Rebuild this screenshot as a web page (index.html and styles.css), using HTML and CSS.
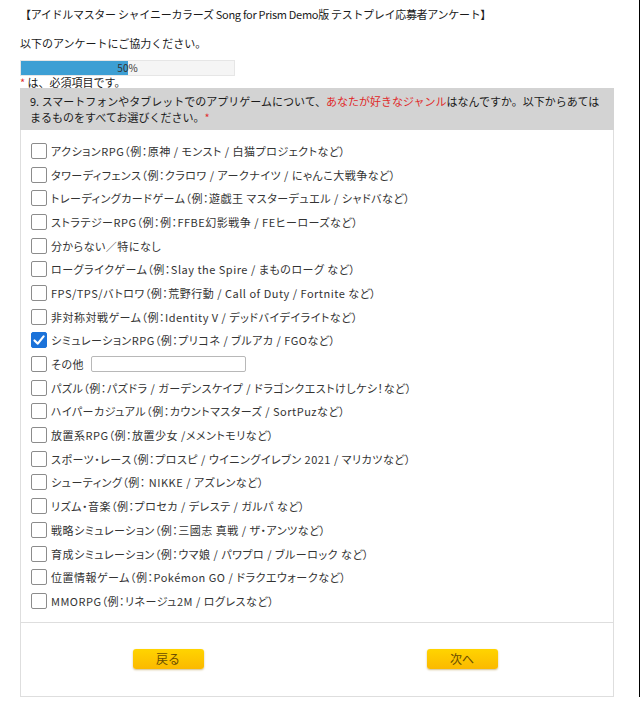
FILE: index.html
```html
<!DOCTYPE html>
<html lang="ja">
<head>
    <meta charset="UTF-8">
    <meta name="viewport" content="width=device-width, initial-scale=1.0">
    <title>テストプレイ応募者アンケート</title>
    <link rel="stylesheet" href="styles.css">
</head>
<body>
    <div class="page">
        <h1 class="title">【アイドルマスター シャイニーカラーズ Song for Prism Demo版 テストプレイ応募者アンケート】</h1>
        <p class="lead">以下のアンケートにご協力ください。</p>

        <div class="progress">
            <div class="bar" style="width: 50%;"></div>
            <span class="label">50%</span>
        </div>
        <p class="note"><span class="req">*</span> は、必須項目です。</p>

        <div class="question">
            9. スマートフォンやタブレットでのアプリゲームについて、<span class="hl">あなたが好きなジャンル</span>はなんですか。以下からあては<br>まるものをすべてお選びください。<span class="req">*</span>
        </div>

        <div class="card">
            <ul class="options">
                <li class="opt"><span class="box"></span>アクションRPG（例：原神 / モンスト / 白猫プロジェクトなど）</li>
                <li class="opt"><span class="box"></span>タワーディフェンス（例：クラロワ / アークナイツ / にゃんこ大戦争など）</li>
                <li class="opt"><span class="box"></span>トレーディングカードゲーム（例：遊戯王 マスターデュエル / シャドバなど）</li>
                <li class="opt"><span class="box"></span>ストラテジーRPG（例：例：FFBE幻影戦争 / FEヒーローズなど）</li>
                <li class="opt"><span class="box"></span>分からない／特になし</li>
                <li class="opt"><span class="box"></span>ローグライクゲーム（例：Slay the Spire / まものローグ など）</li>
                <li class="opt"><span class="box"></span>FPS/TPS/バトロワ（例：荒野行動 / Call of Duty / Fortnite など）</li>
                <li class="opt"><span class="box"></span>非対称対戦ゲーム（例：Identity V / デッドバイデイライトなど）</li>
                <li class="opt"><span class="box checked"><svg viewBox="0 0 16 16" width="16" height="16"><polyline points="3.5,8.5 6.8,11.6 12.6,4.4" fill="none" stroke="#fff" stroke-width="2.2" stroke-linecap="round" stroke-linejoin="round"/></svg></span>シミュレーションRPG（例：プリコネ / ブルアカ / FGOなど）</li>
                <li class="opt"><span class="box"></span>その他<input type="text" class="other"></li>
                <li class="opt"><span class="box"></span>パズル（例：パズドラ / ガーデンスケイプ / ドラゴンクエストけしケシ！など）</li>
                <li class="opt"><span class="box"></span>ハイパーカジュアル（例：カウントマスターズ / SortPuzなど）</li>
                <li class="opt"><span class="box"></span>放置系RPG（例：放置少女 /メメントモリなど）</li>
                <li class="opt"><span class="box"></span>スポーツ・レース（例：プロスピ / ウイニングイレブン 2021 / マリカツなど）</li>
                <li class="opt"><span class="box"></span>シューティング（例： NIKKE / アズレンなど）</li>
                <li class="opt"><span class="box"></span>リズム・音楽（例：プロセカ / デレステ / ガルパ など）</li>
                <li class="opt"><span class="box"></span>戦略シミュレーション（例：三國志 真戦 / ザ・アンツなど）</li>
                <li class="opt"><span class="box"></span>育成シミュレーション（例：ウマ娘 / パワプロ / ブルーロック など）</li>
                <li class="opt"><span class="box"></span>位置情報ゲーム（例：Pokémon GO / ドラクエウォークなど）</li>
                <li class="opt"><span class="box"></span>MMORPG（例：リネージュ2M / ログレスなど）</li>
            </ul>
            <div class="buttons">
                <div class="cell"><button type="button" class="btn">戻る</button></div>
                <div class="cell"><button type="button" class="btn">次へ</button></div>
            </div>
        </div>
    </div>
</body>
</html>
```

FILE: styles.css
```css
html {
    border-right: 1px solid #000;
}

body {
    margin: 0;
    background-color: #fff;
    color: #333;
    font-family: "Noto Sans CJK JP", "Noto Sans", sans-serif;
    font-size: 11px;
}

div.page {
    width: 594px;
    margin-left: 20px;
    padding-top: 7px;
}

h1.title {
    margin: 0;
    font-size: 11px;
    font-weight: normal;
    line-height: 14px;
    color: #1a1a1a;
    letter-spacing: -0.3px;
}

p.lead {
    margin: 15px 0 0;
    line-height: 14px;
    color: #1a1a1a;
}

/* 進捗バー */
div.progress {
    position: relative;
    width: 213px;
    height: 14px;
    margin-top: 10px;
    background-color: #f5f5f5;
    border: 1px solid #e6e6e6;
}

div.progress div.bar {
    height: 100%;
    background-color: #3d9fd4;
}

div.progress span.label {
    position: absolute;
    left: 0;
    right: 0;
    top: 0;
    text-align: center;
    font-size: 10px;
    line-height: 14px;
    color: #333;
}

p.note {
    margin: 0;
    line-height: 12px;
    height: 12px;
    color: #1a1a1a;
}

.req {
    color: #e03030;
}

div.question {
    padding: 5px 10px;
    background-color: #d3d3d3;
    line-height: 16px;
    color: #1a1a1a;
}

div.question span.hl {
    color: #e02828;
}

div.card {
    background-color: #fff;
    border: 1px solid #dedede;
    border-top: none;
}

ul.options {
    list-style: none;
    margin: 0;
    padding: 9px 10px 9px;
}

ul.options li.opt {
    display: flex;
    align-items: center;
    height: 23.7px;
    color: #333;
    font-feature-settings: "palt";
    letter-spacing: 0.5px;
}

span.box {
    width: 14px;
    height: 14px;
    margin-right: 4px;
    border: 1px solid #8c8c8c;
    border-radius: 2px;
    background-color: #fff;
    flex-shrink: 0;
}

span.box.checked {
    background-color: #1b72d9;
    border-color: #1b72d9;
}

span.box.checked svg {
    display: block;
    margin: -1px;
}

input.other {
    width: 153px;
    height: 14px;
    margin-left: 7px;
    padding: 0;
    border: 1px solid #b8b8b8;
    border-radius: 2px;
}

div.buttons {
    display: grid;
    grid-template-columns: 1fr 1fr;
    border-top: 1px solid #dedede;
    padding: 26px 4px 27px 0;
}

div.buttons div.cell {
    display: flex;
    justify-content: center;
}

button.btn {
    width: 71px;
    height: 20px;
    padding: 0;
    border: none;
    border-radius: 3px;
    background: linear-gradient(#ffd400, #fbb900);
    box-shadow: 0 1px 2px rgba(150, 110, 0, 0.45);
    color: #6a4d00;
    font-family: "Noto Sans CJK JP", sans-serif;
    font-size: 12px;
    line-height: 20px;
}
```
